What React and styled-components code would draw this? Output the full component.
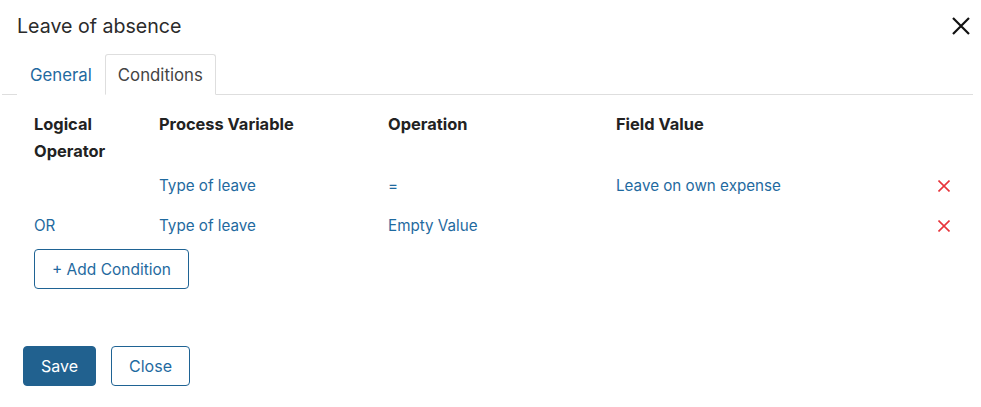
import React, { useState } from "react";
import styled, { createGlobalStyle } from "styled-components";

const GlobalStyle = createGlobalStyle`
  body {
    margin: 0;
    background: #fff;
    font-family: Inter, "Noto Sans", sans-serif;
  }
`;

const conditions = [
  { op: "", variable: "Type of leave", operation: "=", value: "Leave on own expense" },
  { op: "OR", variable: "Type of leave", operation: "Empty Value", value: "" },
];

export default function App() {
  const [tab, setTab] = useState("conditions");
  return (
    <>
      <GlobalStyle />
      <Dialog>
        <Header>
          <Title>Leave of absence</Title>
          <CloseIcon aria-label="Close">
            <svg width="18" height="18" viewBox="0 0 18 18">
              <path d="M1 1 L17 17 M17 1 L1 17" stroke="#111" strokeWidth="2.2" />
            </svg>
          </CloseIcon>
        </Header>
        <Tabs>
          <Tab active={tab === "general"} onClick={() => setTab("general")}>General</Tab>
          <Tab active={tab === "conditions"} onClick={() => setTab("conditions")}>Conditions</Tab>
        </Tabs>
        <Body>
          <Grid>
            <HeadCell>Logical Operator</HeadCell>
            <HeadCell>Process Variable</HeadCell>
            <HeadCell>Operation</HeadCell>
            <HeadCell>Field Value</HeadCell>
            <span />
            {conditions.map((c, i) => (
              <React.Fragment key={i}>
                <Cell>{c.op}</Cell>
                <Cell>{c.variable}</Cell>
                <Cell>{c.operation}</Cell>
                <Cell>{c.value}</Cell>
                <Remove aria-label="Remove">
                  <svg width="12" height="12" viewBox="0 0 12 12">
                    <path d="M0.5 0.5 L11.5 11.5 M11.5 0.5 L0.5 11.5" stroke="#e8343b" strokeWidth="1.6" />
                  </svg>
                </Remove>
              </React.Fragment>
            ))}
          </Grid>
          <OutlineButton wide>+ Add Condition</OutlineButton>
        </Body>
        <Footer>
          <PrimaryButton>Save</PrimaryButton>
          <OutlineButton>Close</OutlineButton>
        </Footer>
      </Dialog>
    </>
  );
}

const Dialog = styled.div`
  width: 981px;
  height: 407px;
  box-sizing: border-box;
  background: #fff;
`;

const Header = styled.div`
  display: flex;
  align-items: center;
  justify-content: space-between;
  padding: 11px 11px 0 17px;
  height: 30px;
`;

const Title = styled.h2`
  margin: 0;
  font-size: 19.6px;
  font-weight: 400;
  color: #2b2b2b;
`;

const CloseIcon = styled.button`
  display: flex;
  border: none;
  background: none;
  padding: 0;
  cursor: pointer;
`;

const Tabs = styled.div`
  display: flex;
  margin: 13px 8px 0 2px;
  padding-left: 15px;
  border-bottom: 1px solid #dedede;
  height: 40px;
`;

const Tab = styled.button`
  font-family: inherit;
  font-size: 16.8px;
  height: 41px;
  padding: 0 12px;
  margin-bottom: -1px;
  background: #fff;
  cursor: pointer;
  color: ${p => (p.active ? "#444" : "#1f6aa0")};
  border: 1px solid ${p => (p.active ? "#dedede" : "transparent")};
  border-bottom-color: ${p => (p.active ? "#fff" : "transparent")};
  border-radius: 3px 3px 0 0;
`;

const Body = styled.div`
  padding: 16px 0 0 34px;
`;

const Grid = styled.div`
  display: grid;
  grid-template-columns: 125px 229px 228px 322px 12px;
  align-items: center;
  width: 916px;
`;

const HeadCell = styled.div`
  font-size: 16.4px;
  font-weight: 650;
  color: #222;
  line-height: 27px;
  align-self: start;
  padding-bottom: 1px;
  padding-right: 20px;
`;

const Cell = styled.div`
  font-size: 15.2px;
  color: #1f6aa0;
  height: 40px;
  line-height: 40px;
`;

const Remove = styled.button`
  display: flex;
  border: none;
  background: none;
  padding: 0;
  cursor: pointer;
`;

const OutlineButton = styled.button`
  font-family: inherit;
  font-size: ${p => (p.wide ? "15.5px" : "16px")};
  color: #1f6aa0;
  background: #fff;
  border: 1px solid #1f6394;
  border-radius: 4px;
  height: 40px;
  padding: 0 17px;
  margin-top: ${p => (p.wide ? "3px" : "0")};
  cursor: pointer;
`;

const PrimaryButton = styled.button`
  font-family: inherit;
  font-size: 16px;
  color: #fff;
  background: #21618f;
  border: 1px solid #21618f;
  border-radius: 4px;
  height: 40px;
  padding: 0 17px;
  cursor: pointer;
`;

const Footer = styled.div`
  display: flex;
  gap: 15px;
  padding: 57px 0 0 23px;
`;
